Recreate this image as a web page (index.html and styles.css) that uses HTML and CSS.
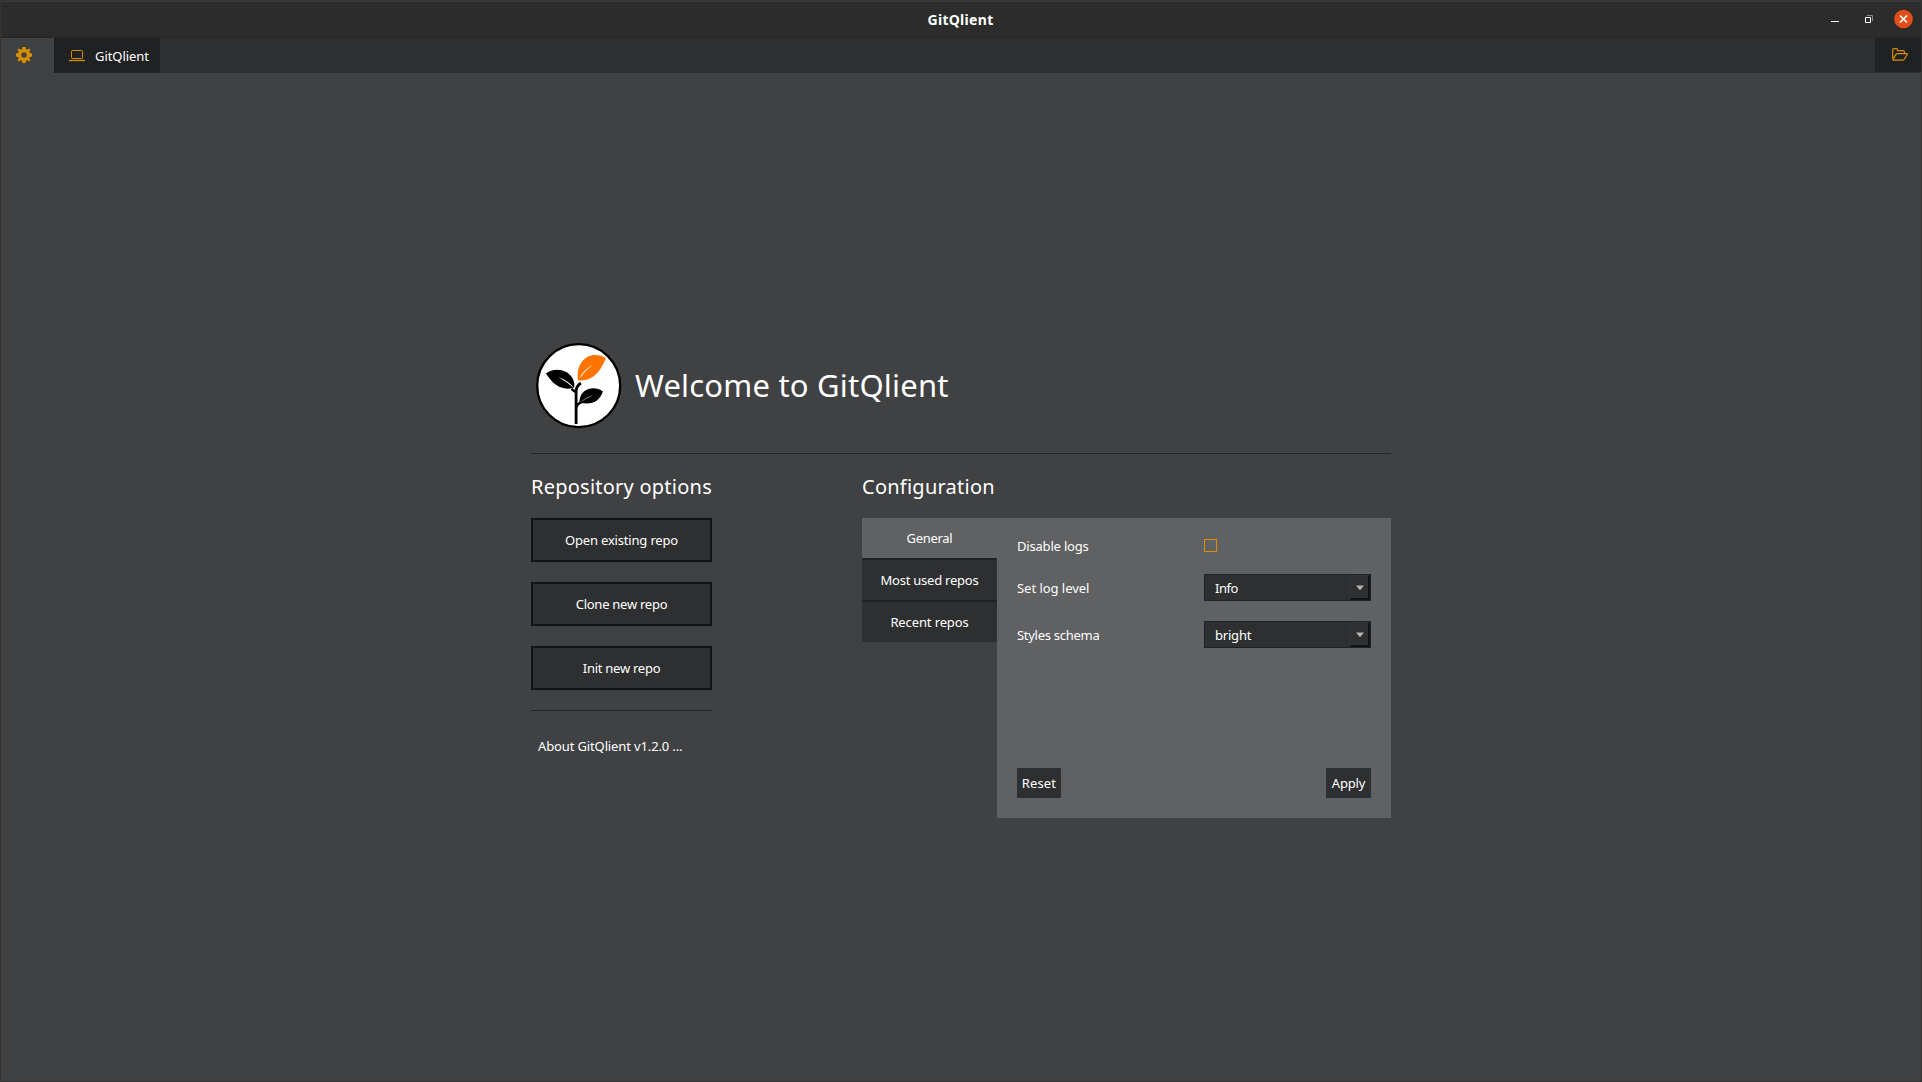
FILE: index.html
```html
<!DOCTYPE html>
<html lang="en">
<head>
<meta charset="utf-8">
<title>GitQlient</title>
<link rel="stylesheet" href="styles.css">
</head>
<body>
<div class="window">
  <header class="titlebar">
    <span class="titlebar-name">GitQlient</span>
    <div class="window-controls">
      <svg width="8" height="20" viewBox="0 0 8 20"><path d="M0 12.500h8" stroke="#fff"/></svg>
      <svg width="8" height="20" viewBox="0 0 8 20" fill="none"><path d="M2 6.500h5.500V12" stroke="#8a8a8a"/><path d="M.5 8.500h5v5h-5z" stroke="#fff"/></svg>
      <svg width="19" height="20" viewBox="0 0 19 20"><circle cx="9.500" cy="10" r="9.300" fill="#e24d19"/><path d="M6 6.500l7 7M13 6.500l-7 7" stroke="#fff" stroke-width="1.600"/></svg>
    </div>
  </header>

  <nav class="tabbar">
    <div class="tab tab-settings">
      <svg width="16" height="16" viewBox="-8 -8 16 16" fill="#d99000">
        <path fill-rule="evenodd" d="M-1.500-8h3l.5 2.200 1.400.6L5.300-6.500 6.500-5.300 5.200-3.400l.6 1.400L8-1.500v3L5.800 2l-.6 1.400L6.500 5.300 5.300 6.500 3.400 5.200 2 5.800 1.500 8h-3L-2 5.800l-1.400-.6L-5.300 6.500-6.500 5.300-5.200 3.400-5.800 2-8 1.500v-3L-5.800-2l.6-1.400L-6.500-5.300-5.300-6.500l1.900 1.300L-2-5.800zM0-2.700A2.700 2.700 0 1 0 0 2.700 2.700 2.700 0 1 0 0-2.700z"/>
      </svg>
    </div>
    <div class="tab tab-repo">
      <svg width="16" height="12" viewBox="0 0 16 12" fill="none" stroke="#d99000">
        <rect x="2.500" y=".5" width="11" height="8" rx="1"/><path d="M0 10.500h16" stroke-width="1.300"/>
      </svg>
      <span>GitQlient</span>
    </div>
    <button class="open-button" aria-label="Open repository">
      <svg width="16" height="13" viewBox="0 0 16 13" fill="none" stroke="#d99000" stroke-width="1.200" stroke-linejoin="round">
        <path d="M.7 10.500V2q0-1.300 1.300-1.300h2.500q1 0 1 1.300v.7h5.500q1.500 0 1.500 1.500v1.300M.9 11.500 3.800 6.600q.6-1 1.700-1h9.200q1 .1.500.9l-2.700 4.500q-.7 1.200-1.800 1.200H1.600q-1 0-.7-.7z"/>
      </svg>
    </button>
  </nav>

  <main class="page">
    <section class="welcome">
      <svg class="logo" width="86" height="86" viewBox="0 0 86 86">
        <circle cx="42.700" cy="42.700" r="41.500" fill="#fff" stroke="#000" stroke-width="2.300"/>
        <g transform="translate(-.6 -.4)">
          <path d="M40.700 81.500V49q0-5.500 4.800-8.600" fill="none" stroke="#000" stroke-width="2.800"/>
          <path d="M41 50 36 46.500M41.300 64.500q.5-3.500 5-5" fill="none" stroke="#000" stroke-width="2.400"/>
          <path d="M42.600 37.600C40.500 25 47 13.500 59 12.500q6-.5 11.500 3C65 30 56 39.500 42.600 37.600z" fill="#ff7300"/>
          <path d="M43.500 36.500Q48.500 27 57.500 22 49.500 28.500 43.500 36.500z" fill="#fff"/>
          <path d="M10.500 31C18 24.500 33 26 38 37.500q1.500 4 .8 7.700C26 48.500 18 42.500 10.500 31z" fill="#000"/>
          <path d="M23 34.500Q33 38 39.500 46.500 31.500 39.500 23 34.500z" fill="#fff"/>
          <path d="M67.500 48.800C60 43 45.500 44.500 44 58q0 1 .2 1.800C55 62.500 63.500 60 67.500 48.800z" fill="#000"/>
          <path d="M58 52.500Q49.500 55 44.500 60.500 50.500 55.500 58 52.500z" fill="#fff"/>
        </g>
      </svg>
      <h1>Welcome to GitQlient</h1>
    </section>

    <div class="columns">
      <section class="repo-options">
        <h2>Repository options</h2>
        <div class="repo-buttons">
          <button class="repo-button">Open existing repo</button>
          <button class="repo-button repo-button-tight">Clone new repo</button>
          <button class="repo-button repo-button-tight">Init new repo</button>
        </div>
        <div class="about">About GitQlient v1.2.0 ...</div>
      </section>

      <section class="configuration">
        <h2>Configuration</h2>
        <div class="config-body">
          <div class="config-tabs">
            <div class="config-tab config-tab-active">General</div>
            <div class="config-tab">Most used repos</div>
            <div class="config-tab config-tab-recent">Recent repos</div>
          </div>
          <div class="config-panel">
            <div class="setting setting-logs"><span class="label-logs">Disable logs</span><span class="checkbox"></span></div>
            <div class="setting"><span class="label-level">Set log level</span>
              <div class="select"><span class="value-level">Info</span><span class="select-arrow"><svg width="8" height="5" viewBox="0 0 8 5"><path d="M0 .5h8L4.500 4.800h-1z" fill="#b4b4b4"/></svg></span></div>
            </div>
            <div class="setting"><span class="label-schema">Styles schema</span>
              <div class="select"><span>bright</span><span class="select-arrow"><svg width="8" height="5" viewBox="0 0 8 5"><path d="M0 .5h8L4.500 4.800h-1z" fill="#b4b4b4"/></svg></span></div>
            </div>
            <div class="actions">
              <button class="action action-reset">Reset</button>
              <button class="action action-apply">Apply</button>
            </div>
          </div>
        </div>
      </section>
    </div>
  </main>
</div>
</body>
</html>
```
FILE: styles.css
```css
* { box-sizing: border-box; }

body {
  margin: 0;
  background: #404142;
  color: #fff;
  font: 13px/18px "Noto Sans", "Open Sans", sans-serif;
}

svg { display: block; flex: none; }

button {
  margin: 0;
  padding: 0;
  border: 0;
  color: inherit;
  font: inherit;
}

.window {
  display: flex;
  flex-direction: column;
  height: 1082px;
  border: 1px solid #353536;
}

/* Title bar */
.titlebar {
  display: grid;
  grid-template-columns: 1fr auto 1fr;
  align-items: center;
  height: 37px;
  border-top: 1px solid #3c3c3c;
  border-bottom: 1px solid #252525;
  background: #2c2c2c;
}

.titlebar-name {
  grid-column: 2;
  padding-right: 1px;
  font-size: 14px;
  font-weight: bold;
  letter-spacing: 0.3px;
}

.window-controls {
  display: flex;
  justify-content: flex-end;
  align-items: center;
  gap: 26px;
  padding: 0 8px 1px 0;
}

.window-controls svg:last-child { margin-left: -5px; }

/* Tabs */
.tabbar {
  display: flex;
  height: 35px;
  background: #2e2f30;
}

.tab {
  display: flex;
  align-items: center;
}

.tab-settings {
  width: 53px;
  padding-left: 15px;
  background: #404142;
}

.tab-settings svg { margin-bottom: 1px; }

.tab-repo {
  gap: 10px;
  width: 106px;
  padding-left: 15px;
  background: #202122;
  letter-spacing: -0.05px;
}

.tab-repo span { padding-top: 1px; }

.open-button {
  display: flex;
  align-items: center;
  width: 46px;
  height: 34px;
  margin-left: auto;
  padding-left: 17px;
  padding-bottom: 2px;
  background: #202122;
}

/* Welcome page */
.page {
  width: 860px;
  margin-left: 530px;
  padding-top: 269px;
}

.welcome {
  display: flex;
  align-items: center;
  gap: 13px;
  height: 112px;
  padding: 0 0 23px 5px;
  border-bottom: 1px solid #222324;
}

h1, h2 {
  margin: 0;
  font-weight: 400;
}

h1 {
  padding-bottom: 2px;
  font-size: 31px;
  line-height: 40px;
  letter-spacing: 0.2px;
}

h2 {
  height: 64px;
  padding-top: 19px;
  font-size: 20px;
  line-height: 28px;
  letter-spacing: 0.24px;
  white-space: nowrap;
}

.columns {
  display: flex;
  justify-content: space-between;
}

.repo-options { width: 181px; }

.repo-buttons {
  display: flex;
  flex-direction: column;
  gap: 20px;
  padding-bottom: 20px;
  border-bottom: 1px solid #222324;
}

.repo-button {
  height: 44px;
  border: 2px solid #121314;
  background: #2e2f30;
  letter-spacing: -0.18px;
}

.repo-button-tight { letter-spacing: -0.26px; }

.about {
  padding: 26px 0 0 7px;
  letter-spacing: -0.13px;
}

/* Configuration */
.configuration { width: 529px; }

.config-body { display: flex; }

.config-tabs { width: 135px; }

.config-tab {
  height: 42px;
  border-top: 2px solid #202122;
  background: #2e2f30;
  line-height: 40px;
  letter-spacing: -0.23px;
  text-align: center;
}

.config-tab-active {
  height: 40px;
  border-top: 0;
  background: #606162;
  letter-spacing: -0.3px;
}

.config-tab-recent { letter-spacing: -0.12px; }

.config-panel {
  display: flex;
  flex-direction: column;
  gap: 20px;
  width: 394px;
  height: 300px;
  padding: 20px;
  background: #606162;
}

.setting {
  display: grid;
  grid-template-columns: 187px 167px;
  align-items: center;
  height: 27px;
}

.setting-logs {
  height: 16px;
  margin: -1px 0 1px;
}

.label-logs { letter-spacing: -0.19px; }
.label-level { letter-spacing: -0.04px; }
.label-schema { letter-spacing: -0.28px; }

.checkbox {
  width: 13px;
  height: 13px;
  margin-bottom: 2px;
  border: 1px solid #d99000;
}

.select {
  display: flex;
  align-items: center;
  justify-content: space-between;
  height: 27px;
  padding-left: 10px;
  border: 1px solid #202122;
  background: #2e2f30;
  letter-spacing: -0.2px;
}

.value-level { letter-spacing: -0.5px; }

.select-arrow {
  display: flex;
  align-items: center;
  justify-content: center;
  width: 20px;
  height: 25px;
  border: 1px solid #353637;
  border-right: 2px solid #121314;
  border-bottom: 2px solid #121314;
}

.actions {
  display: flex;
  justify-content: space-between;
  margin-top: auto;
}

.action {
  height: 30px;
  background: #2e2f30;
}

.action-reset { width: 44px; letter-spacing: 0.13px; }
.action-apply { width: 45px; letter-spacing: -0.16px; }
```
